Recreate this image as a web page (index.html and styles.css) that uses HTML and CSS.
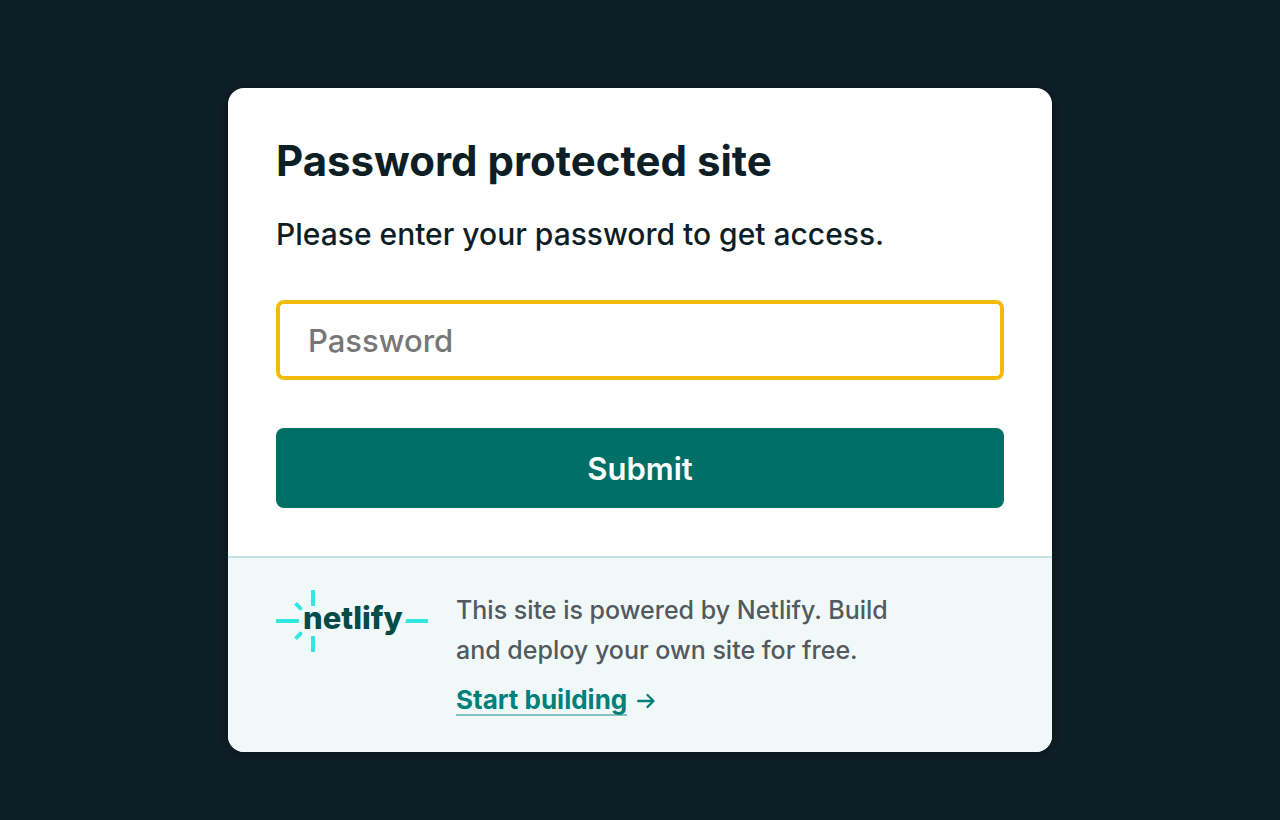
FILE: index.html
```html
<!DOCTYPE html>
<html lang="en">
<head>
<meta charset="utf-8">
<meta name="viewport" content="width=device-width, initial-scale=1">
<title>Password protected site</title>
<link rel="stylesheet" href="styles.css">
</head>
<body>
<main class="card">
  <section class="card-body">
    <h1 class="title">Password protected site</h1>
    <p class="lead">Please enter your password to get access.</p>
    <form class="form">
      <input class="field" type="password" name="password" placeholder="Password" aria-label="Password">
      <button class="submit" type="submit">Submit</button>
    </form>
  </section>
  <footer class="card-footer">
    <svg class="logo" viewBox="0 0 152 62" role="img" aria-label="Netlify">
      <g fill="#32e6e2">
        <path d="M.5 29h22l.5.5v3l-.5.5H.5l-.5-.5v-3zM130.500 29h21l.5.5v3l-.5.5h-22l-.3-.5zM35 .5l.5-.5h3l.5.5v15l-.5.5h-3l-.5-.5zM35 46.500l.5-.5h3l.5.5v15l-.5.5h-3l-.5-.5z"/>
        <path d="M18.200 14.800l2.700-2.700 5.200 5.200v2.900h-2.500zM18.200 47.200l2.700 2.700 5.200-5v-3.100h-2.500z"/>
      </g>
      <text class="logo-text" x="27" y="39">netlify</text>
    </svg>
    <div class="promo">
      <p class="promo-text">This site is powered by Netlify. Build and deploy your own site for free.</p>
      <p class="promo-action">
        <a class="promo-link" href="#">Start building</a>
        <svg class="arrow" viewBox="0 0 18 16" aria-hidden="true">
          <path d="M1.200 8h15M10.500 2l6 6-6 6" fill="none" stroke="currentColor" stroke-width="2.3" stroke-linejoin="round" stroke-linecap="round"/>
        </svg>
      </p>
    </div>
  </footer>
</main>
</body>
</html>
```
FILE: styles.css
```css
*, *::before, *::after {
  box-sizing: border-box;
}

body {
  margin: 0;
  min-height: 100vh;
  padding: 88px 24px 68px;
  background: #0e1e25;
  color: #0e1e25;
  font-family: Inter, "Liberation Sans", sans-serif;
}

h1, p {
  margin: 0;
}

.card {
  max-width: 824px;
  margin: 0 auto;
  overflow: hidden;
  border-radius: 16px;
  background: #fff;
  box-shadow: 0 2px 8px rgba(0, 10, 16, 0.3);
}

.card-body {
  padding: 48px;
}

.title {
  font-size: 42px;
  font-weight: 700;
  line-height: 50px;
}

.lead {
  margin-top: 24px;
  font-size: 30px;
  font-weight: 500;
  line-height: 48px;
}

.form {
  display: flex;
  flex-direction: column;
  gap: 48px;
  margin-top: 42px;
}

.field {
  width: 100%;
  height: 80px;
  padding: 0 28px;
  border: 4px solid #f2bb0c;
  border-radius: 8px;
  outline: none;
  background: #fff;
  color: #0e1e25;
  font: 500 31px Inter, "Liberation Sans", sans-serif;
}

.field::placeholder {
  color: #777;
  opacity: 1;
}

.submit {
  height: 80px;
  border: 0;
  border-radius: 8px;
  background: #007067;
  color: #fff;
  font: 600 31px Inter, "Liberation Sans", sans-serif;
}

.card-footer {
  display: flex;
  gap: 28px;
  padding: 32px 48px 36px;
  border-top: 2px solid #c3e2e3;
  background: #f0f8f8;
}

.logo {
  flex: none;
  width: 152px;
  height: 62px;
}

.logo-text {
  fill: #054b48;
  font-size: 31px;
  font-weight: 800;
}

.promo {
  max-width: 460px;
  line-height: 40px;
}

.promo-text {
  color: #535a5f;
  font-size: 25px;
  font-weight: 500;
}

.promo-action {
  display: flex;
  align-items: center;
  gap: 10px;
  margin-top: 16px;
  color: #00807b;
}

.promo-link {
  border-bottom: 2px solid #85c2c1;
  color: #00807b;
  font-size: 26px;
  font-weight: 700;
  line-height: 28px;
  text-decoration: none;
}

.arrow {
  width: 18px;
  height: 16px;
}
```
